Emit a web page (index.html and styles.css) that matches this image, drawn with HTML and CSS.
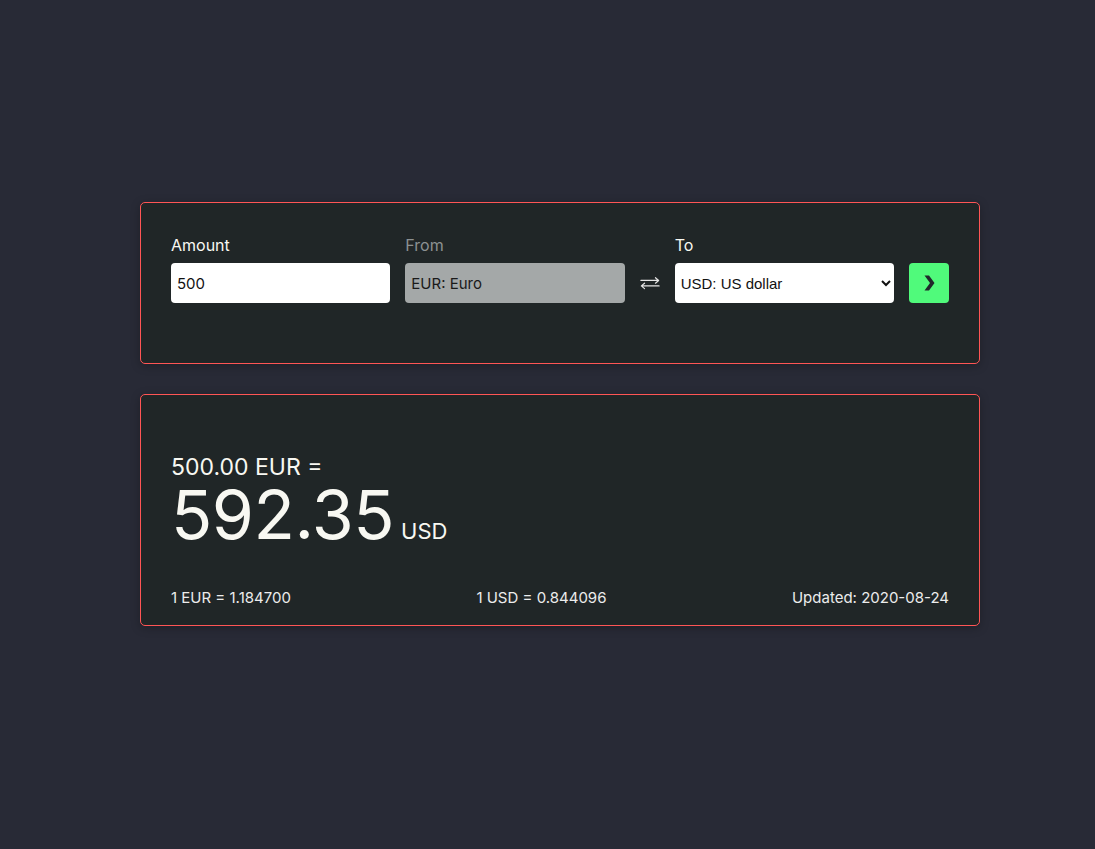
FILE: index.html
```html
<!DOCTYPE html>
<html lang="en">
<head>
<meta charset="utf-8">
<title>Currency converter</title>
<link rel="stylesheet" href="styles.css">
</head>
<body>
<main class="page">
  <section class="card form-card">
    <div class="field">
      <label class="label" for="amount">Amount</label>
      <input class="input" id="amount" type="text" value="500">
    </div>
    <div class="field disabled">
      <label class="label" for="from">From</label>
      <input class="input input-disabled" id="from" type="text" value="EUR: Euro" disabled>
    </div>
    <div class="swap" aria-label="swap">
      <svg width="22" height="16" viewBox="0 0 22 16" fill="none" stroke="#e6e6e6" stroke-width="1.3" stroke-linecap="round" stroke-linejoin="round">
        <path d="M1 5.2H20.5M17 2.2L20.5 5.2L17 8.2"/>
        <path d="M21 11.2H1.5M5 8.2L1.5 11.2L5 14.2"/>
      </svg>
    </div>
    <div class="field">
      <label class="label" for="to">To</label>
      <select class="select" id="to">
        <option>USD: US dollar</option>
      </select>
    </div>
    <button class="go" type="button" aria-label="Convert">
      <svg width="14" height="18" viewBox="0 0 14 18">
        <path d="M2.5 1.5H7L12.5 9L7 16.5H2.5L8 9Z" fill="#21282b"/>
      </svg>
    </button>
  </section>

  <section class="card result-card">
    <div class="result">
      <div class="from-line">500.00 EUR =</div>
      <div class="to-line"><span class="big">592.35</span><span class="cur">USD</span></div>
    </div>
    <div class="rates">
      <span>1 EUR = 1.184700</span>
      <span>1 USD = 0.844096</span>
      <span>Updated: 2020-08-24</span>
    </div>
  </section>
</main>
</body>
</html>
```

FILE: styles.css
```css
* { box-sizing: border-box; }

html, body {
  margin: 0;
  padding: 0;
  background: #282a36;
}

body {
  font-family: Inter, "Noto Sans", sans-serif;
  color: #f8f8f2;
  min-height: 849px;
}

.page {
  width: 980px;
  padding-left: 140px;
  padding-top: 202px;
  display: flex;
  flex-direction: column;
  gap: 30px;
}

.card {
  background: #202627;
  border: 1px solid #ff5555;
  border-radius: 5px;
  box-shadow: 0 2px 10px rgba(0, 0, 0, 0.25);
}

.form-card {
  display: flex;
  align-items: flex-end;
  gap: 15px;
  padding: 30px 30px 60px;
}

.field {
  flex: 1;
  display: flex;
  flex-direction: column;
  gap: 6px;
  min-width: 0;
}

.label {
  font-size: 16px;
  line-height: 24px;
  color: #f8f8f2;
}

.field.disabled .label {
  color: #8c9192;
}

.input,
.select {
  height: 40px;
  width: 100%;
  border: none;
  border-radius: 4px;
  background: #ffffff;
  color: #111111;
  font-family: Inter, "Noto Sans", sans-serif;
  font-size: 15px;
  padding: 0 6px;
  outline: none;
}

.input-disabled {
  background: #a4a8a8;
  color: #1a1a1a;
  -webkit-text-fill-color: #1a1a1a;
  opacity: 1;
}

.select {
  font-family: "Liberation Sans", Arial, sans-serif;
  font-size: 15px;
  padding: 0 2px;
}

.swap {
  width: 20px;
  height: 40px;
  display: flex;
  align-items: center;
  justify-content: center;
  flex: none;
}

.go {
  flex: none;
  width: 40px;
  height: 40px;
  border: none;
  border-radius: 4px;
  background: #50fa7b;
  display: flex;
  align-items: center;
  justify-content: center;
  padding: 0;
  cursor: pointer;
}

.result-card {
  padding: 57px 30px 16px;
}

.result {
  display: flex;
  flex-direction: column;
}

.from-line {
  font-size: 23px;
  line-height: 30px;
}

.to-line {
  display: flex;
  align-items: baseline;
  gap: 7px;
  line-height: 64px;
}

.big {
  font-size: 68px;
  letter-spacing: -0.5px;
}

.cur {
  font-size: 22px;
}

.rates {
  display: flex;
  justify-content: space-between;
  margin-top: 24px;
  font-size: 15px;
  line-height: 22px;
  color: #ececec;
}
```
